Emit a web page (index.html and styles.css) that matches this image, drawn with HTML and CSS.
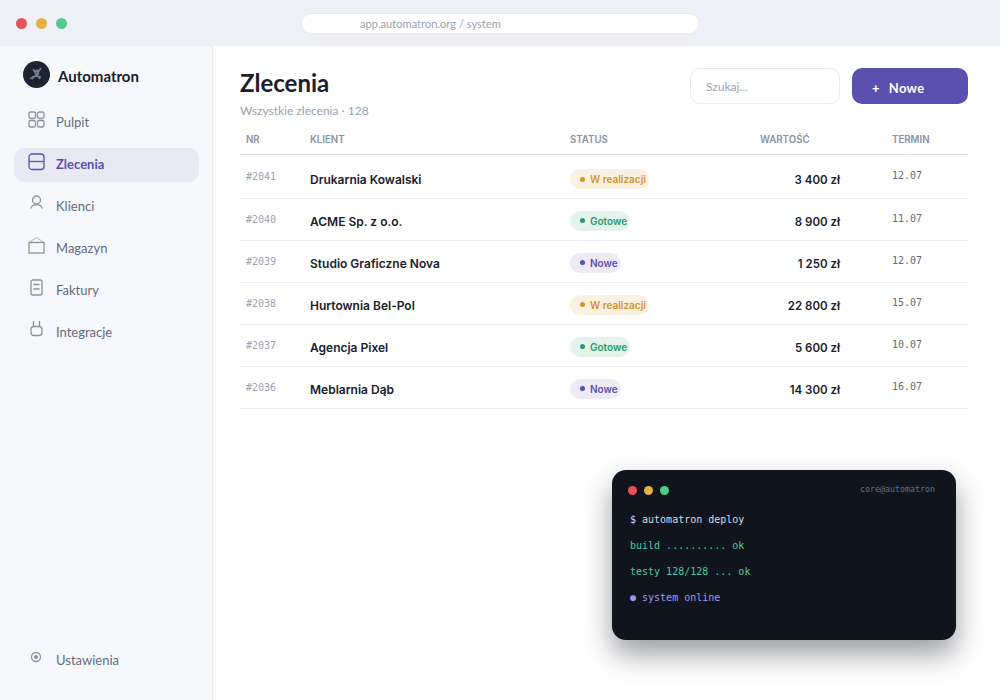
FILE: index.html
```html
<!DOCTYPE html>
<html>
<head>
    <meta charset="utf-8">
    <title>Automatron</title>
    <link rel="stylesheet" href="styles.css">
</head>
<body>
    <div class="titlebar">
        <div class="lights">
            <span class="light red"></span>
            <span class="light yellow"></span>
            <span class="light green"></span>
        </div>
        <div class="url">app.automatron.org / system</div>
    </div>

    <div class="app">
        <aside class="sidebar">
            <div class="brand">
                <svg class="logo" viewBox="0 0 27 27">
                    <circle cx="13.5" cy="13.5" r="13.5" fill="#1c2431"/>
                    <path d="M10 8l3 5 4 5M18 7l-4 6-5 5M11 10l6-1M12 15l6 1M7 18l4-3M13 9l3 5" fill="none" stroke="#767e8a" stroke-width="1.5"/>
                </svg>
                <span class="brand-name">Automatron</span>
            </div>

            <nav class="nav">
                <a class="nav-item">
                    <svg class="icon" viewBox="0 0 18 18"><rect x="1" y="1" width="6.500" height="6.500" rx="1.800"/><rect x="9.500" y="1" width="6.500" height="6.500" rx="1.800"/><rect x="1" y="9.500" width="6.500" height="6.500" rx="1.800"/><rect x="9.500" y="9.500" width="6.500" height="6.500" rx="1.800"/></svg>
                    Pulpit
                </a>
                <a class="nav-item active">
                    <svg class="icon" viewBox="0 0 18 18"><rect x="1" y="1" width="15" height="15.500" rx="3"/><path d="M1 8.500h15"/></svg>
                    Zlecenia
                </a>
                <a class="nav-item">
                    <svg class="icon" viewBox="0 0 18 18"><circle cx="8.500" cy="5" r="4"/><path d="M2.500 13.500c1-2.500 3.200-3.900 6-3.900s5 1.400 6 3.900"/></svg>
                    Klienci
                </a>
                <a class="nav-item">
                    <svg class="icon" viewBox="0 0 18 18"><rect x="1" y="5.500" width="15" height="10.500"/><path class="thin" d="M1 5.500l7.500-5 7.500 5"/></svg>
                    Magazyn
                </a>
                <a class="nav-item">
                    <svg class="icon" viewBox="0 0 18 18"><rect x="3" y="1" width="11" height="15" rx="2"/><path d="M5.500 5.500h6M5.500 10h6"/></svg>
                    Faktury
                </a>
                <a class="nav-item">
                    <svg class="icon" viewBox="0 0 18 18"><rect x="3" y="5.500" width="11" height="9" rx="3"/><path d="M5.500 0v5.500M11.500 0v5.500"/></svg>
                    Integracje
                </a>
            </nav>

            <a class="nav-item settings">
                <svg class="icon" viewBox="0 0 18 18"><circle cx="8" cy="8" r="4.500"/><circle class="dot-fill" cx="8" cy="8" r="2"/></svg>
                Ustawienia
            </a>
        </aside>

        <main class="main">
            <div class="header">
                <div>
                    <h1>Zlecenia</h1>
                    <div class="subtitle">Wszystkie zlecenia · 128</div>
                </div>
                <div class="actions">
                    <div class="search">Szukaj...</div>
                    <button class="btn-new"><span class="plus">+</span>Nowe</button>
                </div>
            </div>

            <table class="orders">
                <thead>
                    <tr>
                        <th class="col-nr">NR</th>
                        <th class="col-client">KLIENT</th>
                        <th class="col-status">STATUS</th>
                        <th class="col-value">WARTOŚĆ</th>
                        <th>TERMIN</th>
                    </tr>
                </thead>
                <tbody>
                    <tr>
                        <td class="nr">#2041</td>
                        <td class="client">Drukarnia Kowalski</td>
                        <td class="status"><span class="pill progress">W realizacji</span></td>
                        <td class="value">3 400 zł</td>
                        <td class="date">12.07</td>
                    </tr>
                    <tr>
                        <td class="nr">#2040</td>
                        <td class="client">ACME Sp. z o.o.</td>
                        <td class="status"><span class="pill done">Gotowe</span></td>
                        <td class="value">8 900 zł</td>
                        <td class="date">11.07</td>
                    </tr>
                    <tr>
                        <td class="nr">#2039</td>
                        <td class="client">Studio Graficzne Nova</td>
                        <td class="status"><span class="pill new">Nowe</span></td>
                        <td class="value">1 250 zł</td>
                        <td class="date">12.07</td>
                    </tr>
                    <tr>
                        <td class="nr">#2038</td>
                        <td class="client">Hurtownia Bel-Pol</td>
                        <td class="status"><span class="pill progress">W realizacji</span></td>
                        <td class="value">22 800 zł</td>
                        <td class="date">15.07</td>
                    </tr>
                    <tr>
                        <td class="nr">#2037</td>
                        <td class="client">Agencja Pixel</td>
                        <td class="status"><span class="pill done">Gotowe</span></td>
                        <td class="value">5 600 zł</td>
                        <td class="date">10.07</td>
                    </tr>
                    <tr>
                        <td class="nr">#2036</td>
                        <td class="client">Meblarnia Dąb</td>
                        <td class="status"><span class="pill new">Nowe</span></td>
                        <td class="value">14 300 zł</td>
                        <td class="date">16.07</td>
                    </tr>
                </tbody>
            </table>
        </main>
    </div>

    <div class="terminal">
        <div class="term-top">
            <div class="term-lights">
                <span class="light red"></span>
                <span class="light yellow"></span>
                <span class="light green"></span>
            </div>
            <span class="term-user">core@automatron</span>
        </div>
        <div class="term-line">$ automatron deploy</div>
        <div class="term-line ok">build .......... ok</div>
        <div class="term-line ok">testy 128/128 ... ok</div>
        <div class="term-line online">● system online</div>
    </div>
</body>
</html>
```

FILE: styles.css
```css
html, body {
    margin: 0;
    height: 700px;
    overflow: hidden;
}
body {
    font-family: Lato, sans-serif;
    background: white;
    color: #1a202c;
}
.titlebar {
    height: 46px;
    background: #eff0f5;
    display: flex;
    align-items: center;
    position: relative;
}
.lights {
    display: flex;
    gap: 9px;
    padding-left: 16px;
}
.light {
    display: block;
    width: 11px;
    height: 11px;
    border-radius: 50%;
}
.red { background: #e5525e; }
.yellow { background: #e3b042; }
.green { background: #4fcb8b; }
.url {
    position: absolute;
    left: 301px;
    top: 13px;
    width: 399px;
    height: 21px;
    box-sizing: border-box;
    padding-left: 58px;
    background: white;
    border: 1px solid #e8eaf1;
    border-radius: 11px;
    font-size: 11px;
    line-height: 20px;
    letter-spacing: 0.05px;
    color: #9aa1b1;
}
.app {
    display: flex;
    height: 654px;
}
.sidebar {
    width: 213px;
    box-sizing: border-box;
    background: #f7f8fc;
    border-right: 1px solid #e8eaf3;
    padding: 15px 13px 22px 14px;
    display: flex;
    flex-direction: column;
}
.brand {
    display: flex;
    align-items: center;
    gap: 8px;
    padding-left: 9px;
    height: 27px;
    margin-bottom: 18px;
}
.logo {
    width: 27px;
    height: 27px;
}
.brand-name {
    font-size: 15px;
    font-weight: 700;
    color: #1a202c;
    padding-top: 2px;
}
.nav {
    display: flex;
    flex-direction: column;
    gap: 8px;
    flex: 1;
}
.nav-item {
    display: flex;
    align-items: center;
    gap: 10px;
    height: 34px;
    box-sizing: border-box;
    padding: 0 0 2px 14px;
    border-radius: 10px;
    font-size: 13px;
    color: #636b7c;
}
.nav-item.active {
    background: #e9e9f4;
    color: #5b4fb0;
    font-weight: 700;
}
.icon {
    width: 18px;
    height: 18px;
    margin-top: -4px;
    fill: none;
    stroke: #8a91a3;
    stroke-width: 1.3;
}
.active .icon {
    stroke: #5b4fb0;
}
.thin {
    stroke-width: 0.7;
}
.dot-fill {
    fill: #8a91a3;
    stroke: none;
}
.main {
    flex: 1;
    padding: 22px 32px 0 27px;
}
.header {
    display: flex;
    justify-content: space-between;
    align-items: flex-start;
    height: 59px;
}
h1 {
    margin: 0;
    font-size: 24px;
    line-height: 30px;
    font-weight: 700;
}
.subtitle {
    margin-top: 5px;
    font-size: 12px;
    line-height: 16px;
    color: #9aa1b1;
}
.actions {
    display: flex;
    gap: 12px;
}
.search {
    width: 150px;
    height: 36px;
    box-sizing: border-box;
    padding-left: 15px;
    background: white;
    border: 1px solid #e8eaf1;
    border-radius: 10px;
    font-size: 12px;
    line-height: 35px;
    color: #9aa1b1;
}
.btn-new {
    width: 116px;
    height: 36px;
    padding: 4px 0 0 20px;
    background: #5b4fb0;
    border: none;
    border-radius: 10px;
    color: white;
    font-family: inherit;
    font-size: 13px;
    font-weight: 700;
    letter-spacing: 0.3px;
    text-align: left;
}
.plus {
    margin-right: 9px;
}
.orders {
    width: 728px;
    table-layout: fixed;
    border-collapse: collapse;
}
.col-nr { width: 64px; }
.col-client { width: 260px; }
.col-status { width: 190px; }
.col-value { width: 132px; }
th {
    height: 22px;
    padding: 1px 0 4px 0;
    text-align: left;
    font-family: Inter, sans-serif;
    font-size: 9.700px;
    font-weight: 600;
    color: #8a91a3;
    border-bottom: 1px solid #e2e6ee;
}
th:first-child, td:first-child {
    padding-left: 6px;
}
td {
    box-sizing: border-box;
    height: 42px;
    padding: 0;
    border-bottom: 1px solid #eceef3;
}
tbody tr:first-child td {
    height: 44px;
}
.nr, .date {
    font-family: "DejaVu Sans Mono", monospace;
    font-size: 10px;
}
.nr { color: #9aa1b1; }
.date {
    color: #636b7c;
    padding-bottom: 2px;
}
.client, .value {
    padding-top: 4px;
    font-family: Inter, sans-serif;
    font-size: 12px;
    font-weight: 600;
}
.status {
    padding-bottom: 1px;
}
tbody tr:first-child .client,
tbody tr:first-child .value {
    padding-top: 6px;
}
tbody tr:first-child .status {
    padding-top: 3px;
}
.value {
    font-size: 11.500px;
    text-align: right;
    padding-right: 52px;
}
.pill {
    display: inline-flex;
    align-items: center;
    gap: 5px;
    height: 20px;
    padding: 0 3px 0 10px;
    border-radius: 10px;
    font-family: Inter, sans-serif;
    font-size: 10px;
    font-weight: 600;
}
.pill::before {
    content: "";
    width: 5px;
    height: 5px;
    border-radius: 50%;
    background: currentColor;
}
.progress { background: #fbf1e1; color: #d8922a; }
.done { background: #e4f4ec; color: #26996a; }
.new { background: #ecebf6; color: #5b4fb0; }
.terminal {
    position: absolute;
    left: 612px;
    top: 470px;
    width: 344px;
    height: 170px;
    box-sizing: border-box;
    padding: 15px 21px 0 18px;
    background: #0f141d;
    border-radius: 14px;
    box-shadow: 0 14px 28px rgba(15, 20, 29, 0.42);
    font-family: "DejaVu Sans Mono", monospace;
    font-size: 10px;
    color: #d9dce3;
}
.term-top {
    display: flex;
    justify-content: space-between;
    height: 26px;
}
.term-lights {
    display: flex;
    gap: 7px;
    padding-top: 1px;
    margin-left: -2px;
}
.term-lights .light {
    width: 9px;
    height: 9px;
}
.term-user {
    font-size: 8.300px;
    line-height: 8px;
    color: #6b7280;
}
.term-line {
    height: 26px;
    line-height: 18px;
}
.ok { color: #4fcb9b; }
.online { color: #a594f0; }
```
